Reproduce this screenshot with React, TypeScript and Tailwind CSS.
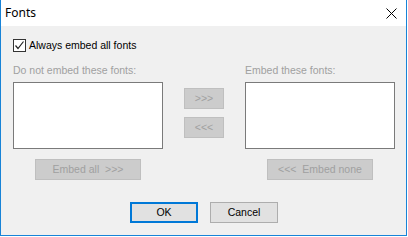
const ui = { fontFamily: '"Liberation Sans", Arial, sans-serif' };

const DisabledButton = ({ label, className = "" }: { label: string; className?: string }) => (
  <div
    className={`flex items-center justify-center h-[21px] bg-[#cccccc] border border-[#bfbfbf] text-[10.5px] text-[#a0a0a0] whitespace-pre ${className}`}
  >
    {label}
  </div>
);

const FontList = ({ label, className = "" }: { label: string; className?: string }) => (
  <div className={`flex flex-col w-[150px] ${className}`}>
    <div className="h-[13px] leading-[13px] text-[10.5px] text-[#a0a0a0]">{label}</div>
    <div className="mt-[5px] h-[67px] bg-white border border-[#7a7a7a]" />
  </div>
);

export default function App() {
  return (
    <div className="w-[408px] h-[237px] bg-white" style={ui}>
      <div className="w-[407px] h-[236px] flex flex-col border-x border-b border-[#1883d7]">
        <div className="h-[26px] flex items-center justify-between bg-white pl-[4px] pr-[9px]">
          <span className="text-[12px] text-black" style={{ fontFamily: '"Noto Sans", "Liberation Sans", sans-serif' }}>
            Fonts
          </span>
          <svg width="11" height="11" viewBox="0 0 11 11" className="mt-[1px]">
            <path d="M0.5 0.5 L10.5 10.5 M10.5 0.5 L0.5 10.5" stroke="#000" strokeWidth="1" />
          </svg>
        </div>

        <div className="flex-1 flex flex-col bg-[#f0f0f0] pl-[12px] pt-[13px]">
          <div className="flex items-center h-[13px] gap-[3px]">
            <div className="w-[13px] h-[13px] bg-white border border-[#333333] flex items-center justify-center">
              <svg width="11" height="11" viewBox="0 0 11 11">
                <path d="M1.5 5.5 L4 8.5 L9.5 1.5" stroke="#222" strokeWidth="1.2" fill="none" />
              </svg>
            </div>
            <span className="text-[10.5px] text-black">Always embed all fonts</span>
          </div>

          <div className="flex mt-[12px]">
            <div className="flex flex-col">
              <FontList label="Do not embed these fonts:" />
              <DisabledButton label="Embed all  >>>" className="w-[106px] ml-[22px] mt-[10px]" />
            </div>
            <div className="flex flex-col w-[40px] ml-[21px] pt-[24px] gap-[8px]">
              <DisabledButton label=">>>" className="w-[40px]" />
              <DisabledButton label="<<<" className="w-[40px]" />
            </div>
            <div className="flex flex-col ml-[21px]">
              <FontList label="Embed these fonts:" />
              <DisabledButton label="<<<  Embed none" className="w-[106px] ml-[22px] mt-[10px]" />
            </div>
          </div>

          <div className="flex mt-[22px] pl-[117px] gap-[12px]">
            <div className="w-[68px] h-[21px] flex items-center justify-center bg-[#e1e1e1] border-2 border-[#0078d7] text-[10.5px] text-black">
              OK
            </div>
            <div className="w-[68px] h-[21px] flex items-center justify-center bg-[#e1e1e1] border border-[#adadad] text-[10.5px] text-black">
              Cancel
            </div>
          </div>
        </div>
      </div>
    </div>
  );
}
